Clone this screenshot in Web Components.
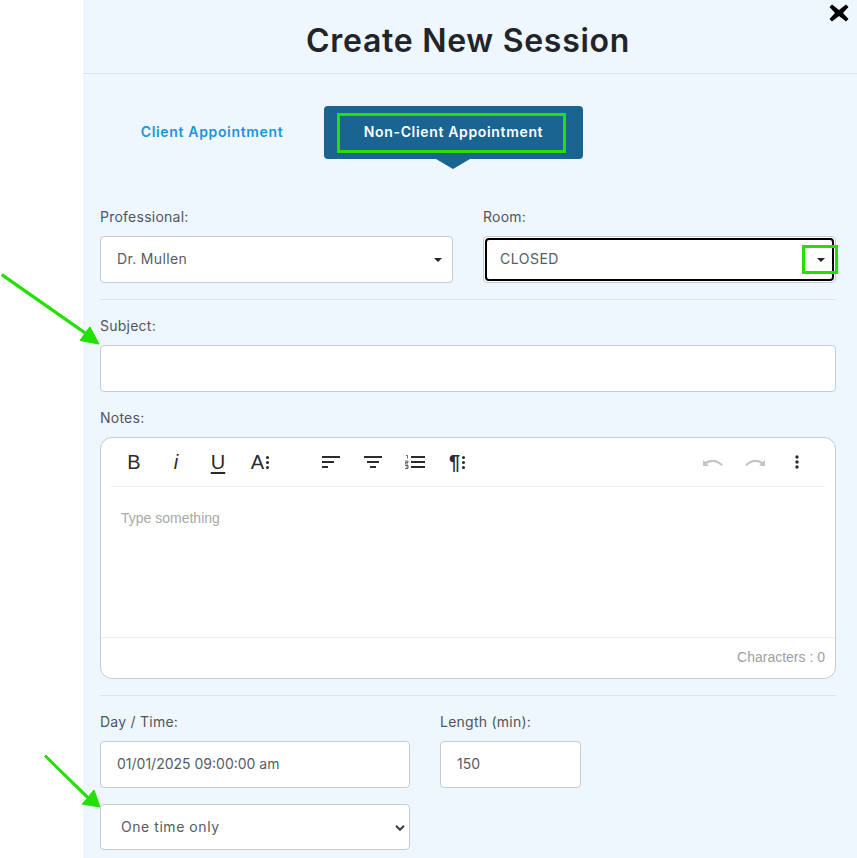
<!DOCTYPE html>
<html lang="en"><head><meta charset="utf-8"><title>Create New Session</title>
<style>html,body{margin:0;padding:0;background:#fff;overflow:hidden;height:858px}</style></head>
<body>
<session-dialog></session-dialog>
<script>
const FONT='Inter,"Open Sans",sans-serif';
function def(name,css,html){
  customElements.define(name,class extends HTMLElement{
    constructor(){super();const r=this.attachShadow({mode:'open'});
      r.innerHTML='<style>'+css+'</style>'+(typeof html==='function'?html(this):html);}
  });
}
def('dialog-header',`:host{display:flex;justify-content:center;align-items:center;box-sizing:border-box;height:74px;padding:9px 21px 0 17px;border-bottom:1px solid #dae2ea;position:relative}
h1{margin:0;font:600 32px/40px ${FONT};color:#212529;letter-spacing:.72px}
svg{position:absolute;right:8px;top:3px}`,
`<h1><slot></slot></h1><svg width="20" height="20" viewBox="0 0 20 20"><path d="M3 1.500 10 7 17 1.500 19.500 4 14 10 19.500 16 17 18.500 10 13 3 18.500 .5 16 6 10 .5 4Z" fill="#000"/></svg>`);
def('session-tabs',`:host{display:flex;margin:32px 0 0 17px;height:53px;font:600 14px/20px ${FONT};letter-spacing:.66px}
.a{width:224px;display:flex;align-items:center;justify-content:center;color:#1a96dc;padding-bottom:1px;box-sizing:border-box}
.b{width:259px;box-sizing:border-box;background:#1a6491;border-radius:4px;color:#fff;position:relative;padding:7px 17px 6px 13px}
.b span{display:flex;height:100%;box-sizing:border-box;align-items:center;justify-content:center;border:3px solid #22e000;padding:0 0 3px 4px}
.b:after{content:"";position:absolute;left:112px;top:53px;border:17px solid transparent;border-top:10px solid #1a6491;border-bottom:0}`,
`<div class="a">Client Appointment</div><div class="b"><span>Non-Client Appointment</span></div>`);
def('field-label',`:host{display:block;font:400 14px/20px ${FONT};color:#50565c;letter-spacing:.24px;height:20px}`,`<slot></slot>`);
def('text-box',`:host{display:flex;align-items:center;box-sizing:border-box;height:47px;background:#fff;border:1px solid #c6cbd0;border-radius:4px;padding:0 16px 2px;font:400 14px/20px ${FONT};color:#565c62;position:relative}
:host([caret]):after{content:"";position:absolute;right:10px;top:21px;border:4px solid transparent;border-top:4px solid #212529;border-bottom:0}
:host([chev]){padding-left:20px;padding-bottom:0}
:host([focus]){padding-left:16px}
:host([focus]):before{content:"";position:absolute;inset:1px;border:2px solid #000;border-radius:4px}
svg{position:absolute;right:3px;top:19px}`,
h=>`<slot></slot>`+(h.hasAttribute('chev')?`<svg width="12" height="8" viewBox="0 0 12 8"><path d="M2 1.800 6 5.800 10 1.800" fill="none" stroke="#3a3f44" stroke-width="2"/></svg>`:''));
def('h-rule',`:host{display:block;height:1px;background:#dae2ea}`,``);
def('rich-editor',`:host{display:block;box-sizing:border-box;height:242px;background:#fff;border:1px solid #c6cbd0;border-radius:12px;overflow:hidden}
.tb{display:flex;align-items:center;height:48px;margin:0 10px;border-bottom:1px solid #eceeef;position:relative;color:#2b2b2b}
.ic{position:absolute;top:0;height:48px;width:42px;display:flex;align-items:center;justify-content:center;font:400 20px/1 "Liberation Sans",sans-serif}
.ic i{font:italic 400 20px "Liberation Sans",sans-serif}
.ic u{text-underline-offset:3px;text-decoration-thickness:2px}
.ic small{display:inline-flex;flex-direction:column;gap:2px;margin-left:2px}
.ic small b{display:block;width:3px;height:3px;background:#2b2b2b;border-radius:50%}
.pil{font-weight:700;font-size:20px}
.body{height:150px;box-sizing:border-box;padding:22px 20px;font:400 14px/18px "Liberation Sans",sans-serif;color:#a8a8a8}
.ft{height:42px;box-sizing:border-box;border-top:1px solid #eceeef;padding:0 10px 4px 0;display:flex;align-items:center;justify-content:flex-end;font:400 14px "Liberation Sans",sans-serif;color:#a0a0a0}`,
`<div class="tb">
<span class="ic" style="left:2px">B</span>
<span class="ic" style="left:44px"><i>i</i></span>
<span class="ic" style="left:86px"><u>U</u></span>
<span class="ic" style="left:128px">A<small><b></b><b></b><b></b></small></span>
<span class="ic" style="left:199px"><svg width="18" height="12" viewBox="0 0 18 12"><path d="M0 1h18M0 6h12M0 11h6" stroke="#2b2b2b" stroke-width="2"/></svg></span>
<span class="ic" style="left:241px"><svg width="18" height="12" viewBox="0 0 18 12"><path d="M0 1h18M3 6h12M6 11h6" stroke="#2b2b2b" stroke-width="2"/></svg></span>
<span class="ic" style="left:283px"><svg width="20" height="14" viewBox="0 0 20 14"><path d="M6 2h14M6 7h14M6 12h14" stroke="#2b2b2b" stroke-width="2"/><path d="M1 .5h1.500v3M0 6h3v1.500H0v1.500h3M0 10.500h3v3H0M1 12h2" fill="none" stroke="#2b2b2b" stroke-width=".7"/></svg></span>
<span class="ic pil" style="left:325px">¶<small><b></b><b></b><b></b></small></span>
<span class="ic" style="left:581px"><svg width="20" height="10" viewBox="0 0 20 10"><path d="M0 3V9H6L4 7C7 4 13 4 18.500 9L19.800 7.500C14 1.500 7 1.500 2.500 5Z" fill="#c4c4c4"/></svg></span>
<span class="ic" style="left:623px"><svg width="20" height="10" viewBox="0 0 20 10"><path d="M20 3V9H14L16 7C13 4 7 4 1.500 9L.2 7.500C6 1.500 13 1.500 17.500 5Z" fill="#c4c4c4"/></svg></span>
<span class="ic" style="left:665px"><svg width="4" height="14" viewBox="0 0 4 14"><circle cx="2" cy="2" r="1.700" fill="#2b2b2b"/><circle cx="2" cy="7" r="1.700" fill="#2b2b2b"/><circle cx="2" cy="12" r="1.700" fill="#2b2b2b"/></svg></span>
</div><div class="body">Type something</div><div class="ft">Characters : 0</div>`);
def('green-arrow',`:host{display:block;position:absolute;pointer-events:none}`,
h=>`<svg width="${h.getAttribute('w')}" height="${h.getAttribute('h')}" style="display:block"><path d="${h.getAttribute('d')}" fill="#22e000" stroke="#22e000" stroke-width="1"/></svg>`);
def('session-form',`:host{display:flex;flex-direction:column;padding:0 21px 0 17px}
.two{display:grid;grid-template-columns:353px 353px;column-gap:30px;margin-top:48px}
.sp{display:flex;flex-direction:column;gap:9px}
.dt{display:grid;grid-template-columns:310px 141px;column-gap:30px;row-gap:16px;margin-top:16px}`,
`<div class="two">
<div class="sp"><field-label>Professional:</field-label><text-box caret style="letter-spacing:.35px">Dr. Mullen</text-box></div>
<div class="sp"><field-label>Room:</field-label><text-box caret focus style="letter-spacing:.5px">CLOSED</text-box></div>
</div>
<h-rule style="margin-top:16px"></h-rule>
<div class="sp" style="margin-top:16px"><field-label>Subject:</field-label><text-box></text-box></div>
<div class="sp" style="margin-top:16px"><field-label>Notes:</field-label><rich-editor></rich-editor></div>
<h-rule style="margin-top:16px"></h-rule>
<div class="dt">
<div class="sp"><field-label>Day / Time:</field-label><text-box>01/01/2025 09:00:00 am</text-box></div>
<div class="sp"><field-label>Length (min):</field-label><text-box>150</text-box></div>
<text-box chev style="height:46px;letter-spacing:.55px">One time only</text-box>
</div>`);
def('session-dialog',`:host{display:block;position:absolute;inset:0;overflow:hidden}
.panel{margin-left:83px;height:858px;background:#eef6fe;display:flex;flex-direction:column}
.box{position:absolute;left:802px;top:245px;width:36px;height:29px;box-sizing:border-box;border:3px solid #22e000}`,
`<div class="panel"><dialog-header>Create New Session</dialog-header><session-tabs></session-tabs><session-form></session-form></div>
<div class="box"></div>
<green-arrow style="left:0;top:270px" w="102" h="76" d="M2.700 3.800 1.300 5.800 84.500 64 80 70.500 99 74 90 57 85.800 62Z"></green-arrow>
<green-arrow style="left:40px;top:750px" w="62" h="60" d="M5.900 5.100 4.500 6.500 47 48.500 42 54 60 57 54 40 48.500 46.500Z"></green-arrow>`);
</script>
</body></html>
